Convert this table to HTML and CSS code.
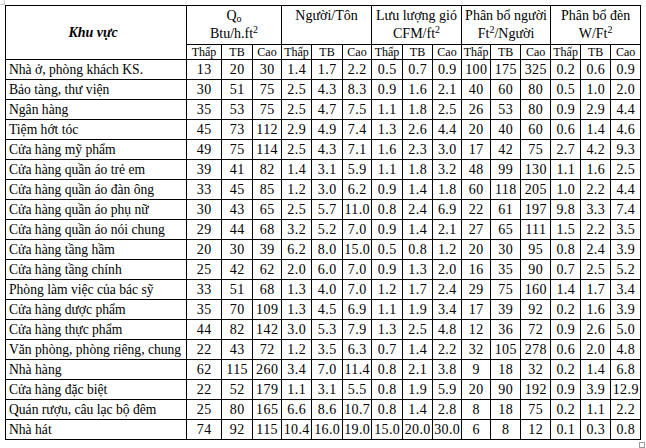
FILE: index.html
```html
<!DOCTYPE html>
<html lang="vi">
<head>
<meta charset="utf-8">
<title>Bảng phụ tải</title>
<link rel="stylesheet" href="styles.css">
</head>
<body>
<span class="handle handle-tl"></span>
<table class="tbl">
<colgroup>
<col><col><col><col><col><col><col><col><col><col><col><col><col><col><col><col>
</colgroup>
<thead>
<tr class="h1">
<th rowspan="2" class="area">Khu vực</th>
<th colspan="3">Q<sub>o</sub><br>Btu/h.ft<sup>2</sup></th>
<th colspan="3">Người/Tôn</th>
<th colspan="3">Lưu lượng gió<br>CFM/ft<sup>2</sup></th>
<th colspan="3">Phân bổ người<br>Ft<sup>2</sup>/Người</th>
<th colspan="3">Phân bổ đèn<br>W/Ft<sup>2</sup></th>
</tr>
<tr class="h2">
<th>Thấp</th><th>TB</th><th>Cao</th>
<th>Thấp</th><th>TB</th><th>Cao</th>
<th>Thấp</th><th>TB</th><th>Cao</th>
<th>Thấp</th><th>TB</th><th>Cao</th>
<th>Thấp</th><th>TB</th><th>Cao</th>
</tr>
</thead>
<tbody>
<tr><td>Nhà ở, phòng khách KS.</td><td>13</td><td>20</td><td>30</td><td>1.4</td><td>1.7</td><td>2.2</td><td>0.5</td><td>0.7</td><td>0.9</td><td>100</td><td>175</td><td>325</td><td>0.2</td><td>0.6</td><td>0.9</td></tr>
<tr><td>Bảo tàng, thư viện</td><td>30</td><td>51</td><td>75</td><td>2.5</td><td>4.3</td><td>8.3</td><td>0.9</td><td>1.6</td><td>2.1</td><td>40</td><td>60</td><td>80</td><td>0.5</td><td>1.0</td><td>2.0</td></tr>
<tr><td>Ngân hàng</td><td>35</td><td>53</td><td>75</td><td>2.5</td><td>4.7</td><td>7.5</td><td>1.1</td><td>1.8</td><td>2.5</td><td>26</td><td>53</td><td>80</td><td>0.9</td><td>2.9</td><td>4.4</td></tr>
<tr><td>Tiệm hớt tóc</td><td>45</td><td>73</td><td>112</td><td>2.9</td><td>4.9</td><td>7.4</td><td>1.3</td><td>2.6</td><td>4.4</td><td>20</td><td>40</td><td>60</td><td>0.6</td><td>1.4</td><td>4.6</td></tr>
<tr><td>Cửa hàng mỹ phẩm</td><td>49</td><td>75</td><td>114</td><td>2.5</td><td>4.3</td><td>7.1</td><td>1.6</td><td>2.3</td><td>3.0</td><td>17</td><td>42</td><td>75</td><td>2.7</td><td>4.2</td><td>9.3</td></tr>
<tr><td>Cửa hàng quần áo trẻ em</td><td>39</td><td>41</td><td>82</td><td>1.4</td><td>3.1</td><td>5.9</td><td>1.1</td><td>1.8</td><td>3.2</td><td>48</td><td>99</td><td>130</td><td>1.1</td><td>1.6</td><td>2.5</td></tr>
<tr><td>Cửa hàng quần áo đàn ông</td><td>33</td><td>45</td><td>85</td><td>1.2</td><td>3.0</td><td>6.2</td><td>0.9</td><td>1.4</td><td>1.8</td><td>60</td><td>118</td><td>205</td><td>1.0</td><td>2.2</td><td>4.4</td></tr>
<tr><td>Cửa hàng quần áo phụ nữ</td><td>30</td><td>43</td><td>65</td><td>2.5</td><td>5.7</td><td>11.0</td><td>0.8</td><td>2.4</td><td>6.9</td><td>22</td><td>61</td><td>197</td><td>9.8</td><td>3.3</td><td>7.4</td></tr>
<tr><td>Cửa hàng quần áo nói chung</td><td>29</td><td>44</td><td>68</td><td>3.2</td><td>5.2</td><td>7.0</td><td>0.9</td><td>1.4</td><td>2.1</td><td>27</td><td>65</td><td>111</td><td>1.5</td><td>2.2</td><td>3.5</td></tr>
<tr><td>Cửa hàng tầng hầm</td><td>20</td><td>30</td><td>39</td><td>6.2</td><td>8.0</td><td>15.0</td><td>0.5</td><td>0.8</td><td>1.2</td><td>20</td><td>30</td><td>95</td><td>0.8</td><td>2.4</td><td>3.9</td></tr>
<tr><td>Cửa hàng tầng chính</td><td>25</td><td>42</td><td>62</td><td>2.0</td><td>6.0</td><td>7.0</td><td>0.9</td><td>1.3</td><td>2.0</td><td>16</td><td>35</td><td>90</td><td>0.7</td><td>2.5</td><td>5.2</td></tr>
<tr><td>Phòng làm việc của bác sỹ</td><td>33</td><td>51</td><td>68</td><td>1.3</td><td>4.0</td><td>7.0</td><td>1.2</td><td>1.7</td><td>2.4</td><td>29</td><td>75</td><td>160</td><td>1.4</td><td>1.7</td><td>3.4</td></tr>
<tr><td>Cửa hàng dược phẩm</td><td>35</td><td>70</td><td>109</td><td>1.3</td><td>4.5</td><td>6.9</td><td>1.1</td><td>1.9</td><td>3.4</td><td>17</td><td>39</td><td>92</td><td>0.2</td><td>1.6</td><td>3.9</td></tr>
<tr><td>Cửa hàng thực phẩm</td><td>44</td><td>82</td><td>142</td><td>3.0</td><td>5.3</td><td>7.9</td><td>1.3</td><td>2.5</td><td>4.8</td><td>12</td><td>36</td><td>72</td><td>0.9</td><td>2.6</td><td>5.0</td></tr>
<tr><td>Văn phòng, phòng riêng, chung</td><td>22</td><td>43</td><td>72</td><td>1.2</td><td>3.5</td><td>6.3</td><td>0.7</td><td>1.4</td><td>2.2</td><td>32</td><td>105</td><td>278</td><td>0.6</td><td>2.0</td><td>4.8</td></tr>
<tr><td>Nhà hàng</td><td>62</td><td>115</td><td>260</td><td>3.4</td><td>7.0</td><td>11.4</td><td>0.8</td><td>2.1</td><td>3.8</td><td>9</td><td>18</td><td>32</td><td>0.2</td><td>1.4</td><td>6.8</td></tr>
<tr><td>Cửa hàng đặc biệt</td><td>22</td><td>52</td><td>179</td><td>1.1</td><td>3.1</td><td>5.5</td><td>0.8</td><td>1.9</td><td>5.9</td><td>20</td><td>90</td><td>192</td><td>0.9</td><td>3.9</td><td>12.9</td></tr>
<tr><td>Quán rượu, câu lạc bộ đêm</td><td>25</td><td>80</td><td>165</td><td>6.6</td><td>8.6</td><td>10.7</td><td>0.8</td><td>1.4</td><td>2.8</td><td>8</td><td>18</td><td>75</td><td>0.2</td><td>1.1</td><td>2.2</td></tr>
<tr><td>Nhà hát</td><td>74</td><td>92</td><td>115</td><td>10.4</td><td>16.0</td><td>19.0</td><td>15.0</td><td>20.0</td><td>30.0</td><td>6</td><td>8</td><td>12</td><td>0.1</td><td>0.3</td><td>0.8</td></tr>
</tbody>
</table>
<span class="handle handle-br"></span>
</body>
</html>
```

FILE: styles.css
```css
html, body {
  margin: 0;
  padding: 0;
  background: #ffffff;
}
body {
  position: relative;
  width: 646px;
  height: 448px;
  overflow: hidden;
  font-family: "Liberation Serif", "Times New Roman", serif;
  color: #000;
}
.tbl {
  position: relative;
  margin: 5px 0 0 5px;
  border-collapse: collapse;
  table-layout: fixed;
  width: 636px;
  font-size: 14px;
}
.tbl col { width: 30px; }
.tbl col:nth-child(1) { width: 181px; }
.tbl col:nth-child(2) { width: 35px; }
.tbl col:nth-child(3) { width: 31px; }
.tbl col:nth-child(4) { width: 29px; }
.tbl col:nth-child(5) { width: 30px; }
.tbl col:nth-child(6) { width: 31px; }
.tbl col:nth-child(7) { width: 29px; }
.tbl col:nth-child(8) { width: 31px; }
.tbl col:nth-child(9) { width: 30px; }
.tbl col:nth-child(10) { width: 29px; }
.tbl col:nth-child(11) { width: 29px; }
.tbl th, .tbl td {
  border: 1px solid #000;
  padding: 0;
  white-space: nowrap;
  overflow: hidden;
}
.tbl th {
  font-weight: normal;
  text-align: center;
}
.h1 th {
  height: 39px;
  vertical-align: top;
  line-height: 18px;
  padding-top: 1px;
  box-sizing: border-box;
}
.h1 th.area {
  vertical-align: middle;
  font-weight: bold;
  font-style: italic;
  padding: 0 6px 0 0;
}
.h2 th {
  height: 15px;
  font-size: 12px;
  line-height: 14px;
  box-sizing: border-box;
}
.tbl sup, .tbl sub {
  font-size: 10px;
  line-height: 0;
}
.tbl sup { vertical-align: 5px; }
.tbl sub { vertical-align: -2px; }
.tbl td {
  height: 19px;
  box-sizing: border-box;
  line-height: 18px;
  padding-top: 1px;
  text-align: center;
  letter-spacing: 0.4px;
  text-indent: 0.4px;
}
.tbl td:first-child {
  text-align: left;
  padding-left: 3px;
  font-size: 13.6px;
  letter-spacing: 0;
  text-indent: 0;
}
.handle {
  position: absolute;
  display: block;
  box-sizing: border-box;
  border: 1px solid #9a9a9a;
  background: #fff;
}
.handle-tl {
  left: -2px;
  top: -2px;
  width: 7px;
  height: 7px;
  border-color: #c8c8c8;
}
.handle-br {
  left: 639px;
  top: 442px;
  width: 6px;
  height: 6px;
}
```
